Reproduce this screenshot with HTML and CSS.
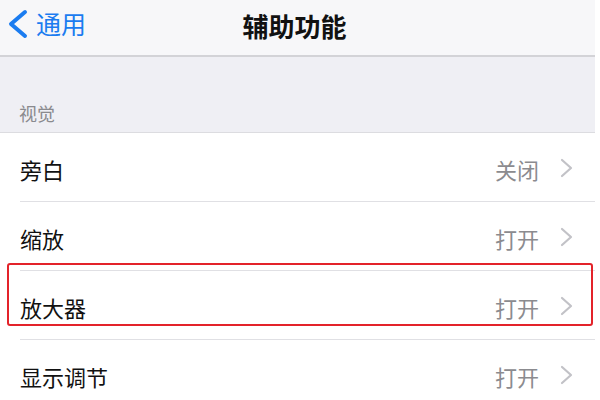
FILE: index.html
```html
<!DOCTYPE html>
<html lang="zh-CN">
<head>
<meta charset="utf-8">
<link rel="stylesheet" href="styles.css">
</head>
<body>
<div class="screen">
  <header class="nav">
    <div class="back">
      <svg class="back-icon" width="22" height="30" viewBox="0 0 22 30"><polyline points="18,3 4,15 18,27" fill="none" stroke="#1b7cf0" stroke-width="4" stroke-linecap="round" stroke-linejoin="round"/></svg>
      <span class="back-text">通用</span>
    </div>
    <div class="title">辅助功能</div>
  </header>
  <div class="group-header"><span>视觉</span></div>
  <ul class="list">
    <li class="cell"><div class="cell-inner"><span class="label">旁白</span><span class="detail"><span class="value">关闭</span><svg class="chev" width="13" height="20" viewBox="0 0 13 20"><polyline points="2,2 11,10 2,18" fill="none" stroke="#c2c2c7" stroke-width="2.2" stroke-linecap="round" stroke-linejoin="round"/></svg></span></div></li>
    <li class="cell"><div class="cell-inner"><span class="label">缩放</span><span class="detail"><span class="value">打开</span><svg class="chev" width="13" height="20" viewBox="0 0 13 20"><polyline points="2,2 11,10 2,18" fill="none" stroke="#c2c2c7" stroke-width="2.2" stroke-linecap="round" stroke-linejoin="round"/></svg></span></div></li>
    <li class="cell cell-highlight"><div class="cell-inner"><span class="label">放大器</span><span class="detail"><span class="value">打开</span><svg class="chev" width="13" height="20" viewBox="0 0 13 20"><polyline points="2,2 11,10 2,18" fill="none" stroke="#c2c2c7" stroke-width="2.2" stroke-linecap="round" stroke-linejoin="round"/></svg></span></div></li>
    <li class="cell"><div class="cell-inner"><span class="label">显示调节</span><span class="detail"><span class="value">打开</span><svg class="chev" width="13" height="20" viewBox="0 0 13 20"><polyline points="2,2 11,10 2,18" fill="none" stroke="#c2c2c7" stroke-width="2.2" stroke-linecap="round" stroke-linejoin="round"/></svg></span></div></li>
  </ul>
</div>
</body>
</html>
```
FILE: styles.css
```css
html, body {
  margin: 0;
  padding: 0;
  background: #ffffff;
  overflow: hidden;
}
body {
  font-family: "Noto Sans CJK SC", "Noto Sans", sans-serif;
}
.screen {
  width: 595px;
  height: 400px;
  overflow: hidden;
  background: #ffffff;
}
.nav {
  height: 55px;
  background: #f7f7f9;
  border-bottom: 2px solid #d3d3d7;
  display: flex;
  align-items: center;
  justify-content: center;
  position: relative;
}
.back {
  position: absolute;
  left: 7px;
  top: 9px;
  display: flex;
  align-items: center;
  gap: 7px;
}
.back-icon {
  display: block;
}
.back-text {
  font-size: 25px;
  line-height: 30px;
  color: #1b7cf0;
  margin-top: -2px;
}
.title {
  font-size: 26px;
  font-weight: 700;
  color: #111111;
  line-height: 30px;
  margin-top: -4px;
  margin-left: -6px;
}
.group-header {
  background: #efeff4;
  border-bottom: 1px solid #dcdce0;
  display: flex;
  align-items: flex-end;
  padding-left: 19px;
  box-sizing: border-box;
  height: 76px;
}
.group-header span {
  font-size: 18px;
  line-height: 20px;
  color: #8a8a8e;
  margin-bottom: 9px;
}
.list {
  list-style: none;
  margin: 0;
  padding: 0;
}
.cell {
  padding-left: 20px;
  background: #ffffff;
}
.cell-inner {
  height: 68px;
  border-bottom: 1px solid #e0e0e4;
  display: flex;
  align-items: center;
  justify-content: space-between;
  padding-right: 22px;
}
.label {
  font-size: 22px;
  color: #111111;
  line-height: 26px;
  margin-top: 3px;
}
.detail {
  display: flex;
  align-items: center;
  gap: 21px;
}
.value {
  font-size: 22px;
  color: #8b8b8f;
  line-height: 26px;
  margin-top: 3px;
}
.chev {
  display: block;
  margin-top: 1px;
}
.cell-highlight {
  position: relative;
}
.cell-highlight::after {
  content: "";
  position: absolute;
  left: 7px;
  right: 2px;
  top: -8px;
  bottom: 14px;
  border: 2px solid #e3232a;
  border-radius: 3px;
  pointer-events: none;
}
```
